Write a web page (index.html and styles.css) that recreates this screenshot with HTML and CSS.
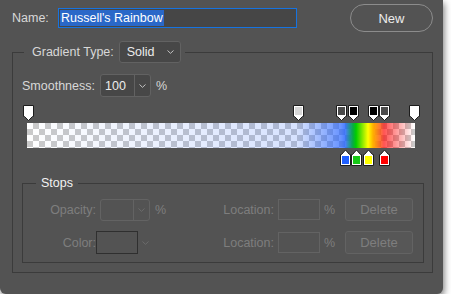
FILE: index.html
```html
<!DOCTYPE html>
<html lang="en">
<head>
    <meta charset="UTF-8">
    <title>Gradient Editor</title>
    <link rel="stylesheet" href="styles.css">
</head>
<body>
    <div class="dialog">
        <div class="top-row">
            <span class="label name-label">Name:</span>
            <div class="name-field"><span class="selected">Russell's Rainbow</span></div>
            <button class="new-btn">New</button>
        </div>
        <fieldset class="group outer">
            <legend class="type-legend">
                <span class="label">Gradient Type:</span>
                <span class="select type-select">Solid
                    <svg class="chev" width="7" height="4" viewBox="0 0 7 4"><path d="M0.5 0.5L3.5 3.3L6.5 0.5" fill="none" stroke="#c4c4c4"/></svg>
                </span>
            </legend>
            <div class="smooth-row">
                <span class="label">Smoothness:</span>
                <span class="select combo">
                    <span class="combo-value">100</span>
                    <span class="combo-arrow"><svg width="7" height="4" viewBox="0 0 7 4"><path d="M0.5 0.5L3.5 3.3L6.5 0.5" fill="none" stroke="#c4c4c4"/></svg></span>
                </span>
                <span class="label unit">%</span>
            </div>
            <div class="ramp">
                <div class="bar"></div>
                <svg class="stop top" style="left:1px" width="11" height="17"><path d="M0.5 0.5H10.5V11.5H9.5L5.5 15.5L1.5 11.5H0.5Z" fill="#fff" stroke="#1c1c1c"/><rect x="2" y="2" width="7" height="8" fill="#ffffff"/></svg>
                <svg class="stop top" style="left:271px" width="11" height="17"><path d="M0.5 0.5H10.5V11.5H9.5L5.5 15.5L1.5 11.5H0.5Z" fill="#fff" stroke="#1c1c1c"/><rect x="2" y="2" width="7" height="8" fill="#d6d6d6"/></svg>
                <svg class="stop top" style="left:314px" width="11" height="17"><path d="M0.5 0.5H10.5V11.5H9.5L5.5 15.5L1.5 11.5H0.5Z" fill="#fff" stroke="#1c1c1c"/><rect x="2" y="2" width="7" height="8" fill="#4b4b4b"/></svg>
                <svg class="stop top" style="left:326px" width="11" height="17"><path d="M0.5 0.5H10.5V11.5H9.5L5.5 15.5L1.5 11.5H0.5Z" fill="#fff" stroke="#1c1c1c"/><rect x="2" y="2" width="7" height="8" fill="#000000"/></svg>
                <svg class="stop top" style="left:346px" width="11" height="17"><path d="M0.5 0.5H10.5V11.5H9.5L5.5 15.5L1.5 11.5H0.5Z" fill="#fff" stroke="#1c1c1c"/><rect x="2" y="2" width="7" height="8" fill="#000000"/></svg>
                <svg class="stop top" style="left:357px" width="11" height="17"><path d="M0.5 0.5H10.5V11.5H9.5L5.5 15.5L1.5 11.5H0.5Z" fill="#fff" stroke="#1c1c1c"/><rect x="2" y="2" width="7" height="8" fill="#4b4b4b"/></svg>
                <svg class="stop top" style="left:387px" width="11" height="17"><path d="M0.5 0.5H10.5V11.5H9.5L5.5 15.5L1.5 11.5H0.5Z" fill="#fff" stroke="#1c1c1c"/><rect x="2" y="2" width="7" height="8" fill="#ffffff"/></svg>

                <svg class="stop bottom" style="left:318px" width="11" height="17"><path d="M0.5 16.5H10.5V5.5H9.5L5.5 1L1.5 5.5H0.5Z" fill="#fff" stroke="#1c1c1c"/><rect x="2" y="7" width="7" height="8" fill="#1f5fff"/></svg>
                <svg class="stop bottom" style="left:329px" width="11" height="17"><path d="M0.5 16.5H10.5V5.5H9.5L5.5 1L1.5 5.5H0.5Z" fill="#fff" stroke="#1c1c1c"/><rect x="2" y="7" width="7" height="8" fill="#17c817"/></svg>
                <svg class="stop bottom" style="left:341px" width="11" height="17"><path d="M0.5 16.5H10.5V5.5H9.5L5.5 1L1.5 5.5H0.5Z" fill="#fff" stroke="#1c1c1c"/><rect x="2" y="7" width="7" height="8" fill="#ffff00"/></svg>
                <svg class="stop bottom" style="left:357px" width="11" height="17"><path d="M0.5 16.5H10.5V5.5H9.5L5.5 1L1.5 5.5H0.5Z" fill="#fff" stroke="#1c1c1c"/><rect x="2" y="7" width="7" height="8" fill="#ff0000"/></svg>
            </div>
            <fieldset class="group stops">
                <legend class="stops-legend">Stops</legend>
                <div class="stop-row">
                    <span class="dim field-label">Opacity:</span>
                    <span class="select combo off">
                        <span class="combo-value"></span>
                        <span class="combo-arrow"><svg width="7" height="4" viewBox="0 0 7 4"><path d="M0.5 0.5L3.5 3.3L6.5 0.5" fill="none" stroke="#6c6c6c"/></svg></span>
                    </span>
                    <span class="dim pct">%</span>
                    <span class="dim loc-label">Location:</span>
                    <span class="loc-input"></span>
                    <span class="dim pct2">%</span>
                    <button class="delete-btn">Delete</button>
                </div>
                <div class="stop-row">
                    <span class="dim field-label">Color:</span>
                    <span class="color-box"></span>
                    <span class="color-arrow"><svg width="7" height="4" viewBox="0 0 7 4"><path d="M0.5 0.5L3.5 3.3L6.5 0.5" fill="none" stroke="#6c6c6c"/></svg></span>
                    <span class="dim loc-label">Location:</span>
                    <span class="loc-input"></span>
                    <span class="dim pct2">%</span>
                    <button class="delete-btn">Delete</button>
                </div>
            </fieldset>
        </fieldset>
    </div>
</body>
</html>
```

FILE: styles.css
```css
body {
    margin: 0;
    background: #ffffff;
    font-family: "Liberation Sans", Arial, sans-serif;
    font-size: 12.5px;
}
.dialog {
    width: 443px;
    height: 294px;
    background: #535353;
    border-radius: 0 0 6px 6px;
    box-shadow: 1px 3px 7px rgba(0, 0, 0, 0.55);
    overflow: hidden;
}
.label {
    color: #d8d8d8;
}
.dim {
    color: #7e7e7e;
}

/* name row */
.top-row {
    display: flex;
    align-items: center;
    height: 28px;
    padding-top: 4px;
}
.name-label {
    margin-left: 12px;
    width: 46px;
}
.name-field {
    width: 236px;
    height: 18px;
    border: 1px solid #1673e0;
    background: #464646;
    display: flex;
    align-items: center;
    padding-left: 1px;
}
.selected {
    background: #2a68c8;
    color: #ffffff;
    line-height: 16px;
    padding: 0 1px;
}
.new-btn {
    margin-left: 53px;
    width: 83px;
    height: 28px;
    border: 1px solid #8c8c8c;
    border-radius: 14px;
    background: #535353;
    color: #ececec;
    font-family: inherit;
    font-size: 13px;
    padding: 0;
}

/* group boxes */
.group {
    margin: 0;
    border: 1px solid #3b3b3b;
    min-width: 0;
}
.outer {
    margin: 9px 0 0 12px;
    width: 421px;
    box-sizing: border-box;
    padding: 11px 8px 9px 9px;
}
.type-legend {
    margin-left: 2px;
    padding: 0 4px 0 8px;
    display: flex;
    align-items: center;
}
.select {
    display: inline-flex;
    align-items: center;
    box-sizing: border-box;
    border: 1px solid #626262;
    border-radius: 3px;
    background: #474747;
    color: #ececec;
}
.type-select {
    margin-left: 5px;
    width: 62px;
    height: 22px;
    padding-left: 7px;
    justify-content: space-between;
    padding-right: 6px;
}

/* smoothness */
.smooth-row {
    display: flex;
    align-items: center;
    height: 23px;
}
.smooth-row .label:first-child {
    width: 78px;
}
.combo {
    width: 51px;
    height: 23px;
}
.combo-value {
    flex: 1;
    padding-left: 4px;
    height: 100%;
    display: flex;
    align-items: center;
}
.combo-arrow {
    width: 15px;
    height: 100%;
    border-left: 1px solid #626262;
    display: flex;
    align-items: center;
    justify-content: center;
}
.unit {
    margin-left: 5px;
}

/* gradient ramp */
.ramp {
    position: relative;
    margin-top: 8px;
    height: 62px;
}
.bar {
    position: absolute;
    left: 5px;
    top: 18px;
    width: 388px;
    height: 25px;
    background:
        linear-gradient(to right,
            rgba(31, 95, 255, 0) 0%,
            rgba(31, 95, 255, 0.18) 69.8%,
            rgba(31, 95, 255, 0.67) 80.9%,
            rgba(31, 95, 255, 0.8) 82%,
            rgba(8, 170, 70, 1) 84%,
            rgb(0, 205, 0) 84.8%,
            rgb(255, 255, 0) 87.9%,
            rgb(255, 175, 0) 89.2%,
            rgba(255, 0, 0, 0.67) 92%,
            rgba(255, 0, 0, 0) 99.7%),
        conic-gradient(#cacaca 25%, #ffffff 0 50%, #cacaca 0 75%, #ffffff 0);
    background-size: auto, 12px 12px;
}
.stop {
    position: absolute;
    display: block;
}
.stop.top {
    top: 0;
}
.stop.bottom {
    top: 44px;
}

/* stops box */
.stops {
    margin-top: 8px;
    padding: 7px 0 8px 0;
}
.stops-legend {
    margin-left: 13px;
    padding: 0 5px;
    color: #f2f2f2;
    line-height: 16px;
}
.stop-row {
    display: flex;
    align-items: center;
    height: 23px;
}
.stop-row + .stop-row {
    margin-top: 10px;
}
.field-label {
    width: 73px;
    text-align: right;
}
.off {
    margin-left: 4px;
    width: 50px;
    height: 22px;
    background: #535353;
    border-color: #636363;
}
.off .combo-arrow {
    border-left-color: #636363;
}
.pct {
    margin-left: 5px;
    width: 20px;
}
.color-box {
    box-sizing: border-box;
    width: 42px;
    height: 23px;
    border: 1px solid #2f2f2f;
}
.color-arrow {
    width: 37px;
    padding-left: 4px;
    box-sizing: border-box;
    display: flex;
}
.loc-label {
    width: 99px;
    text-align: right;
}
.loc-input {
    box-sizing: border-box;
    margin-left: 4px;
    width: 42px;
    height: 21px;
    border: 1px solid #636363;
}
.pct2 {
    margin-left: 4px;
    width: 21px;
}
.delete-btn {
    width: 68px;
    height: 23px;
    padding: 0;
    border: 1px solid #636363;
    border-radius: 3px;
    background: #575757;
    color: #7e7e7e;
    font-family: inherit;
    font-size: 13px;
}
```
